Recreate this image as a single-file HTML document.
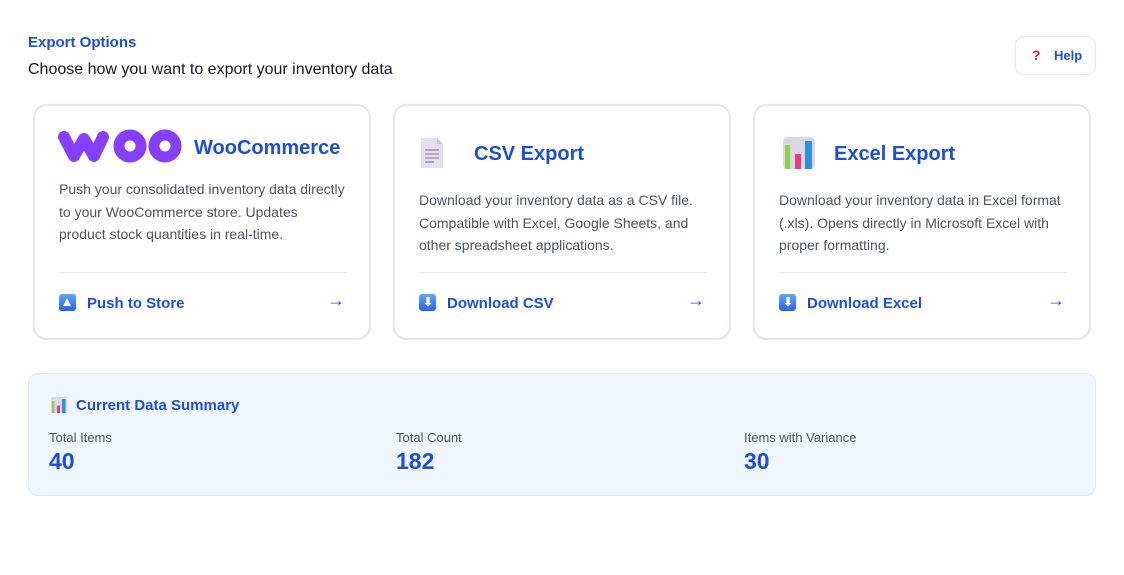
<!DOCTYPE html>
<html><head><meta charset="utf-8"><style>
*{margin:0;padding:0;box-sizing:border-box}
body{width:1124px;height:575px;background:#fff;font-family:"Liberation Sans",sans-serif;position:relative;overflow:hidden}
.a{position:absolute}
.h1{left:28px;top:34px;font-size:15px;font-weight:bold;color:#1d4ed8}
.sub{left:28px;top:61px;font-size:16px;color:#111827}
.help{left:1015px;top:36px;width:81px;height:39px;border:1.5px solid #dbeafe;border-radius:9px;font-size:13px;color:#1d4ed8;font-weight:bold}
.card{top:104px;width:338px;height:236px;border:2px solid #e4e6f0;border-radius:14px;background:#fff;box-shadow:0 1px 3px rgba(0,0,0,.04)}
.t{font-size:20px;font-weight:bold;color:#1d4ed8}
.d{left:24px;width:300px;font-size:14px;line-height:22.5px;color:#4b5563;white-space:nowrap}
.hr{left:24px;width:288px;top:166px;height:1px;background:#e5e7eb}
.btn{left:24px;top:188px;font-size:15px;font-weight:bold;color:#1d4ed8}
.arr{right:24px;top:184px;font-size:18px;color:#1d4ed8}
.ic{display:inline-block;width:17px;height:17px;border-radius:3px;background:linear-gradient(#60a5fa,#2563eb);vertical-align:-3px;margin-right:11px;position:relative}
.sum{left:28px;top:373px;width:1068px;height:123px;background:#eff6ff;border:1px solid #dbeafe;border-radius:10px}
.lab{font-size:13px;color:#4b5563;top:56px}
.num{font-size:23px;font-weight:bold;color:#1d4ed8;top:74px}
</style></head><body>
<div class="a h1">Export Options</div>
<div class="a sub">Choose how you want to export your inventory data</div>
<div class="a help"><span class="a" style="left:16px;top:10px;color:#e11d48;font-size:14px;font-weight:900">?</span><span class="a" style="left:38px;top:11px">Help</span></div>

<div class="a card" style="left:33px">
<svg class="a" style="left:23px;top:22px" width="126" height="36" viewBox="0 0 126 36">
<polyline points="6,9 16,28 26,11 36,28 45,9" fill="none" stroke="#873eff" stroke-width="12" stroke-linejoin="round" stroke-linecap="round"/>
<circle cx="72" cy="18" r="11" fill="none" stroke="#873eff" stroke-width="11"/>
<circle cx="107" cy="18" r="11" fill="none" stroke="#873eff" stroke-width="11"/>
</svg>
<div class="a t" style="left:159px;top:31px">WooCommerce</div>
<div class="a d" style="top:72px">Push your consolidated inventory data directly<br>to your WooCommerce store. Updates<br>product stock quantities in real-time.</div>
<div class="a hr"></div>
<div class="a btn"><span class="ic"><span class="a" style="left:4px;top:4px;width:0;height:0;border-left:4.5px solid transparent;border-right:4.5px solid transparent;border-bottom:8px solid #fff"></span></span>Push to Store</div>
<div class="a arr">→</div>
</div>

<div class="a card" style="left:393px">
<svg class="a" style="left:24px;top:31px" width="26" height="32" viewBox="0 0 26 32"><path d="M2 1H18L24 7V31H2Z" fill="#e6def0"/><path d="M18 1V7H24Z" fill="#c9bfd6"/><g stroke="#9a90a8" stroke-width="1.4"><line x1="6" y1="13" x2="20" y2="13"/><line x1="6" y1="17" x2="20" y2="17"/><line x1="6" y1="21" x2="20" y2="21"/><line x1="6" y1="25" x2="15" y2="25"/></g></svg>
<div class="a t" style="left:79px;top:37px">CSV Export</div>
<div class="a d" style="top:83px">Download your inventory data as a CSV file.<br>Compatible with Excel, Google Sheets, and<br>other spreadsheet applications.</div>
<div class="a hr"></div>
<div class="a btn"><span class="ic"><span class="a" style="left:4px;top:3px;color:#fff;font-size:12px;line-height:11px">⬇</span></span>Download CSV</div>
<div class="a arr">→</div>
</div>

<div class="a card" style="left:753px">
<svg class="a" style="left:28px;top:31px" width="32" height="32" viewBox="0 0 32 32"><rect width="32" height="32" rx="4" fill="#ddd6e6"/><rect x="2" y="8" width="5" height="24" fill="#8bd44a"/><rect x="12" y="17" width="6" height="15" fill="#e63c78"/><rect x="22" y="4" width="7" height="28" fill="#2e8fe6"/></svg>
<div class="a t" style="left:79px;top:37px">Excel Export</div>
<div class="a d" style="top:83px">Download your inventory data in Excel format<br>(.xls). Opens directly in Microsoft Excel with<br>proper formatting.</div>
<div class="a hr"></div>
<div class="a btn"><span class="ic"><span class="a" style="left:4px;top:3px;color:#fff;font-size:12px;line-height:11px">⬇</span></span>Download Excel</div>
<div class="a arr">→</div>
</div>

<div class="a sum">
<svg class="a" style="left:22px;top:23px" width="16" height="16" viewBox="0 0 32 32"><rect width="32" height="32" rx="4" fill="#ddd6e6"/><rect x="2" y="8" width="5" height="24" fill="#8bd44a"/><rect x="12" y="17" width="6" height="15" fill="#e63c78"/><rect x="22" y="4" width="7" height="28" fill="#2e8fe6"/></svg>
<div class="a" style="left:47px;top:23px;font-size:15px;font-weight:bold;color:#1d4ed8">Current Data Summary</div>
<div class="a lab" style="left:20px">Total Items</div><div class="a num" style="left:20px">40</div>
<div class="a lab" style="left:367px">Total Count</div><div class="a num" style="left:367px">182</div>
<div class="a lab" style="left:715px">Items with Variance</div><div class="a num" style="left:715px">30</div>
</div>
</body></html>
